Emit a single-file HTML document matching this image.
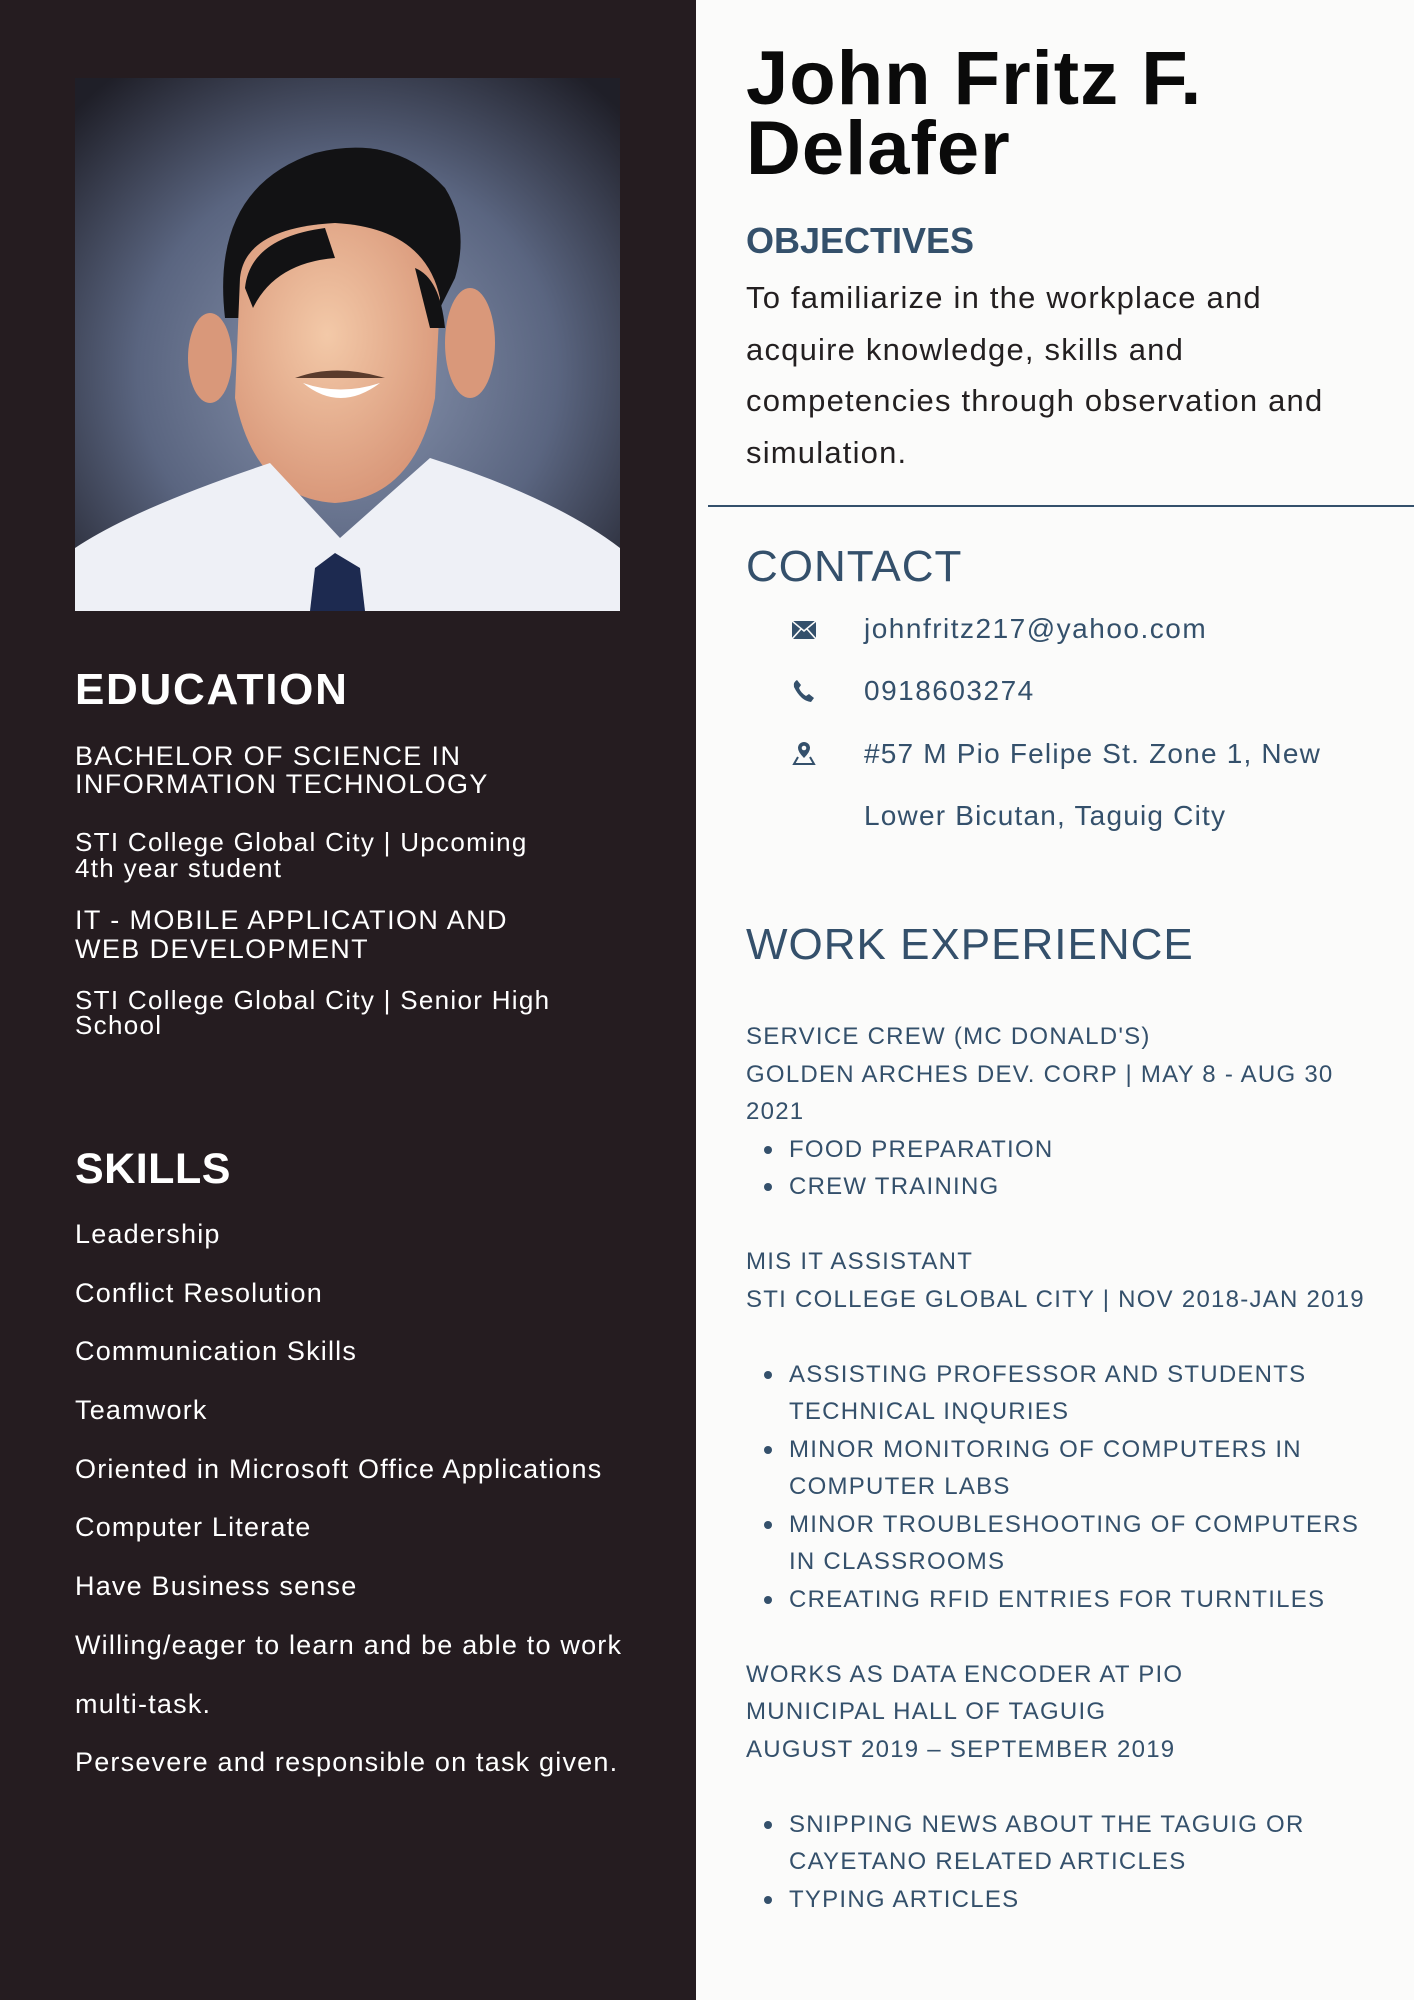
<!DOCTYPE html>
<html><head><meta charset="utf-8"><style>
*{margin:0;padding:0;box-sizing:border-box}
body{width:1414px;height:2000px;position:relative;background:#fbfbfa;font-family:"Liberation Sans",sans-serif;overflow:hidden}
#side{position:absolute;left:0;top:0;width:696px;height:2000px;background:#251c20}
.a{position:absolute;white-space:nowrap}
.w{color:#fff}
.blue{color:#34506b}
.wl div{height:37.5px;line-height:37.5px;font-size:24px;letter-spacing:1.25px;color:#34506b;white-space:nowrap}
.wl .b{padding-left:43px;position:relative}
.wl .b.d::before{content:"";position:absolute;left:18px;top:15px;width:8px;height:8px;border-radius:50%;background:#34506b}
.sk div{height:58.7px;line-height:58.7px;font-size:27px;letter-spacing:1.2px;color:#fff;white-space:nowrap}
</style></head><body>
<div id="side"></div>
<svg class="a" style="left:75px;top:78px" width="545" height="533" viewBox="0 0 545 533">
<defs>
<radialGradient id="bg" cx="0.5" cy="0.55" r="0.7"><stop offset="0" stop-color="#8a96b0"/><stop offset="0.55" stop-color="#5a6580"/><stop offset="1" stop-color="#1f1f28"/></radialGradient>
<radialGradient id="sk" cx="0.45" cy="0.4" r="0.6"><stop offset="0" stop-color="#f3c9a8"/><stop offset="1" stop-color="#d9987a"/></radialGradient>
</defs>
<rect width="545" height="533" fill="url(#bg)"/>
<path d="M150 240 Q135 110 240 75 Q320 55 370 110 Q395 150 380 200 L360 240 Z" fill="#121214"/>
<ellipse cx="135" cy="280" rx="22" ry="45" fill="#d9987a"/>
<ellipse cx="395" cy="265" rx="25" ry="55" fill="#d9987a"/>
<path d="M165 200 Q170 150 260 145 Q350 150 365 220 L360 320 Q340 420 260 425 Q180 420 160 320 Z" fill="url(#sk)"/>
<path d="M170 210 Q175 160 250 150 L260 180 Q200 185 178 230 Z" fill="#121214"/>
<path d="M340 190 Q365 200 370 250 L355 250 Z" fill="#121214"/>
<path d="M220 300 Q260 285 310 300 Q265 300 220 300Z" fill="#5a3b2c"/>
<path d="M228 305 Q265 335 305 305 Q265 318 228 305Z" fill="#fff"/>
<path d="M0 533 L0 470 Q60 430 195 385 L265 460 L355 380 Q480 420 545 470 L545 533 Z" fill="#eef0f6"/>
<path d="M240 490 L260 475 L285 490 L290 533 L235 533 Z" fill="#1d2a50"/>
</svg>
<div class="a w" style="left:75px;top:664px;font-size:44px;font-weight:bold;line-height:52px;letter-spacing:1.7px">EDUCATION</div>
<div class="a w" style="left:75px;top:742px;font-size:27px;line-height:28px;letter-spacing:1.4px">BACHELOR OF SCIENCE IN<br>INFORMATION TECHNOLOGY</div>
<div class="a w" style="left:75px;top:829px;font-size:26px;line-height:26px;letter-spacing:1.3px">STI College Global City | Upcoming<br>4th year student</div>
<div class="a w" style="left:75px;top:906px;font-size:27px;line-height:29px;letter-spacing:1.4px">IT - MOBILE APPLICATION AND<br>WEB DEVELOPMENT</div>
<div class="a w" style="left:75px;top:988px;font-size:26px;line-height:25px;letter-spacing:1.3px">STI College Global City | Senior High<br>School</div>
<div class="a w" style="left:75px;top:1143px;font-size:43px;font-weight:bold;line-height:52px;letter-spacing:0.5px">SKILLS</div>
<div class="a sk" style="left:75px;top:1205px">
<div>Leadership</div><div>Conflict Resolution</div><div>Communication Skills</div><div>Teamwork</div><div>Oriented in Microsoft Office Applications</div><div>Computer Literate</div><div>Have Business sense</div><div>Willing/eager to learn and be able to work</div><div>multi-task.</div><div>Persevere and responsible on task given.</div>
</div>

<div class="a" style="left:746px;top:44px;font-size:76px;font-weight:bold;line-height:70px;color:#0a0a0a;letter-spacing:1px">John Fritz F.<br>Delafer</div>
<div class="a blue" style="left:746px;top:219px;font-size:36px;font-weight:bold;line-height:44px">OBJECTIVES</div>
<div class="a" style="left:746px;top:272px;font-size:31px;line-height:51.5px;letter-spacing:1.2px;color:#231f20">To familiarize in the workplace and<br>acquire knowledge, skills and<br>competencies through observation and<br>simulation.</div>
<div class="a" style="left:708px;top:505px;width:706px;height:2px;background:#34506b"></div>
<div class="a blue" style="left:746px;top:541px;font-size:44px;line-height:52px;letter-spacing:1px">CONTACT</div>
<svg class="a" style="left:792px;top:621px" width="24" height="18" viewBox="0 0 24 18"><rect width="24" height="18" fill="#34506b"/><path d="M0 0 L12 10 L24 0 M0 18 L9 8 M24 18 L15 8" stroke="#fbfbfa" stroke-width="1.6" fill="none"/></svg>
<svg class="a" style="left:792px;top:679px" width="24" height="24" viewBox="0 0 24 24"><path d="M5 1 L9 6 L7 9 Q9 14 14 17 L17 15 L22 19 L19 23 Q9 22 2 8 Q1 3 5 1Z" fill="#34506b"/></svg>
<svg class="a" style="left:792px;top:740px" width="24" height="26" viewBox="0 0 24 26"><path d="M12 2 a6 6 0 0 1 6 6 q0 4 -6 10 q-6 -6 -6 -10 a6 6 0 0 1 6 -6z" fill="#34506b"/><circle cx="12" cy="8" r="2.3" fill="#fbfbfa"/><path d="M6 17 L2 24 L22 24 L18 17" stroke="#34506b" stroke-width="2" fill="none"/></svg>
<div class="a blue" style="left:864px;top:611px;font-size:28px;line-height:36px;letter-spacing:1.5px">johnfritz217@yahoo.com</div>
<div class="a blue" style="left:864px;top:673px;font-size:28px;line-height:36px;letter-spacing:1.5px">0918603274</div>
<div class="a blue" style="left:864px;top:736px;font-size:28px;line-height:36px;letter-spacing:1.2px">#57 M Pio Felipe St. Zone 1, New</div>
<div class="a blue" style="left:864px;top:798px;font-size:28px;line-height:36px;letter-spacing:1.2px">Lower Bicutan, Taguig City</div>
<div class="a blue" style="left:746px;top:919px;font-size:44px;line-height:52px;letter-spacing:1px">WORK EXPERIENCE</div>
<div class="a wl" style="left:746px;top:1018px">
<div>SERVICE CREW (MC DONALD'S)</div>
<div>GOLDEN ARCHES DEV. CORP | MAY 8 - AUG 30</div>
<div>2021</div>
<div class="b d">FOOD PREPARATION</div>
<div class="b d">CREW TRAINING</div>
<div></div>
<div>MIS IT ASSISTANT</div>
<div>STI COLLEGE GLOBAL CITY | NOV 2018-JAN 2019</div>
<div></div>
<div class="b d">ASSISTING PROFESSOR AND STUDENTS</div>
<div class="b">TECHNICAL INQURIES</div>
<div class="b d">MINOR MONITORING OF COMPUTERS IN</div>
<div class="b">COMPUTER LABS</div>
<div class="b d">MINOR TROUBLESHOOTING OF COMPUTERS</div>
<div class="b">IN CLASSROOMS</div>
<div class="b d">CREATING RFID ENTRIES FOR TURNTILES</div>
<div></div>
<div>WORKS AS DATA ENCODER AT PIO</div>
<div>MUNICIPAL HALL OF TAGUIG</div>
<div>AUGUST 2019 – SEPTEMBER 2019</div>
<div></div>
<div class="b d">SNIPPING NEWS ABOUT THE TAGUIG OR</div>
<div class="b">CAYETANO RELATED ARTICLES</div>
<div class="b d">TYPING ARTICLES</div>
</div>
</body></html>
